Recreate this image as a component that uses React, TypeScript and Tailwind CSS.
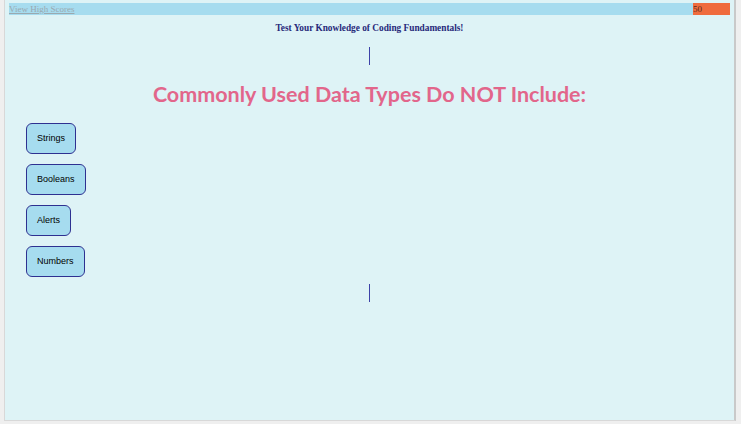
const answers = ["Strings", "Booleans", "Alerts", "Numbers"];

export default function App() {
  return (
    <div className="flex h-[424px] w-[741px] bg-[#efefef] pl-[4px] pr-[5px] pb-[3px]">
      <div className="flex flex-1 flex-col border-l border-r-2 border-b border-l-[#d8d8d8] border-r-[#c9c9c9] border-b-[#d8d8d8] bg-[#def3f6] px-[4px] pt-[3px]">
        <header className="flex h-[12px] items-stretch bg-[#a6dcef] font-['Liberation_Serif',serif] text-[9px] leading-[12px]">
          <a className="flex-1 text-[#9aa9b0] underline">View High Scores</a>
          <div className="w-[37px] bg-[#ef6b3d] text-[#5a2a1a]">50</div>
        </header>
        <h2 className="mt-[6px] text-center font-['Liberation_Serif',serif] text-[9.3px] font-bold leading-[14px] text-[#26297a]">
          Test Your Knowledge of Coding Fundamentals!
        </h2>
        <div className="mx-auto mt-[12px] h-[18px] w-px bg-[#3d42a8]" />
        <h1 className="mt-[15px] text-center font-['Lato',sans-serif] text-[21.5px] font-bold leading-[29px] text-[#e2668b]">
          Commonly Used Data Types Do NOT Include:
        </h1>
        <div className="mt-[14px] flex flex-col items-start gap-[10px] pl-[17px]">
          {answers.map((a) => (
            <button
              key={a}
              className="h-[31px] rounded-[6px] border border-[#2e3191] bg-[#a6dcef] px-[10px] font-['Liberation_Sans',sans-serif] text-[9px] text-black"
            >
              {a}
            </button>
          ))}
        </div>
        <div className="mx-auto mt-[7px] h-[18px] w-px bg-[#3d42a8]" />
      </div>
    </div>
  );
}
